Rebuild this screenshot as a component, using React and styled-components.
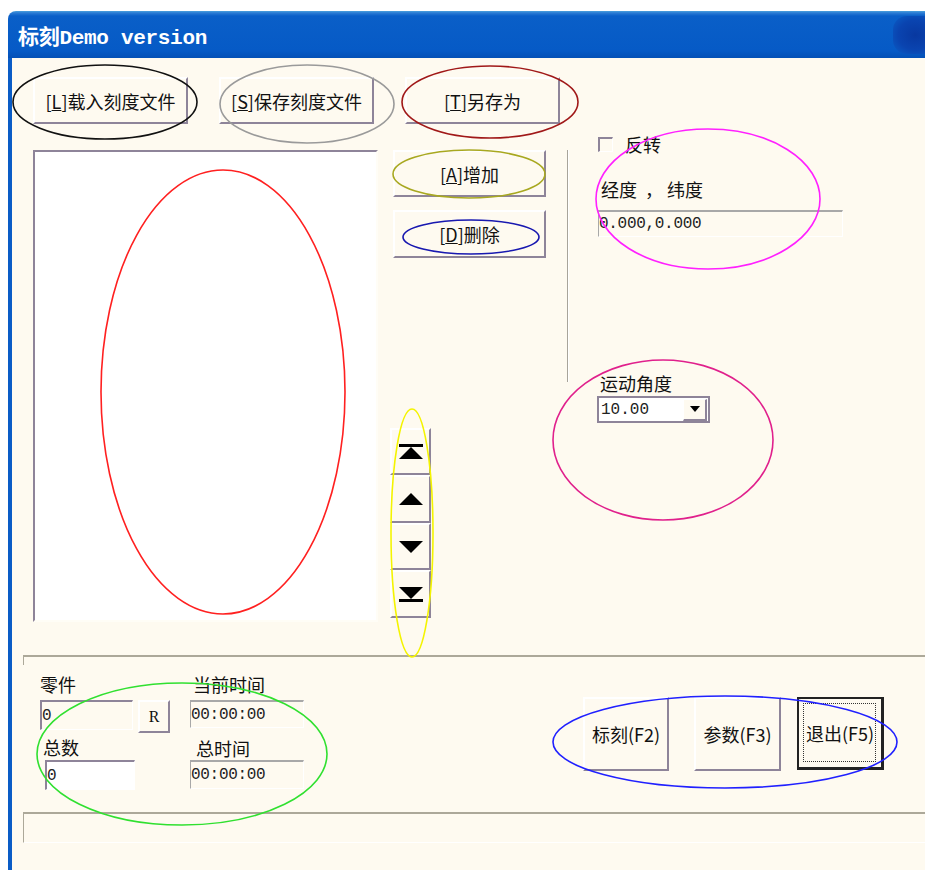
import React from "react";
import styled, { createGlobalStyle } from "styled-components";

const GlobalStyle = createGlobalStyle`
  html, body { margin: 0; padding: 0; background: #fff; }
  body {
    width: 925px;
    height: 870px;
    overflow: hidden;
    font-family: "Noto Sans CJK SC", sans-serif;
  }
  * { box-sizing: border-box; }
`;

const CREAM = "#fefaf0";
const SHADE = "#8e8499";
const GROOVE = "#aca899";

const Page = styled.div`
  position: relative;
  width: 925px;
  height: 870px;
  padding: 11px 0 0 8px;
`;

const Window = styled.div`
  height: 859px;
  display: flex;
  flex-direction: column;
`;

const TitleBar = styled.div`
  height: 47px;
  flex: none;
  display: flex;
  align-items: center;
  padding-left: 10px;
  border-top-left-radius: 8px;
  background: linear-gradient(#4aa0dc 0, #2a7ad4 2px, #0a5fc8 5px, #065ac6 85%, #0450b6 100%);
  color: #fff;
  font: bold 21px "Liberation Mono", "Noto Sans CJK SC", monospace;
  letter-spacing: -0.3px;
`;

const CloseBlob = styled.div`
  margin-left: auto;
  width: 32px;
  height: 38px;
  border-radius: 14px 0 0 14px;
  background: radial-gradient(ellipse at 70% 50%, #0838a0 0, #0a44b0 55%, #0a5fc8 100%);
`;

const Client = styled.div`
  flex: 1;
  background: ${CREAM};
  border-left: 4px solid #0a5cc6;
  padding: 19px 0 0 21px;
  display: flex;
  flex-direction: column;
`;

const TopArea = styled.div`
  display: flex;
`;

const LeftBlock = styled.div`
  width: 526px;
  display: flex;
  flex-direction: column;
`;

const ButtonRow = styled.div`
  display: flex;
  gap: 31px;
`;

const Btn = styled.button`
  width: ${(p) => p.$w}px;
  height: ${(p) => p.$h}px;
  flex: none;
  padding: 0;
  margin: 0;
  position: relative;
  background: ${CREAM};
  border: 0;
  border-top: 2px solid #fff;
  border-left: 2px solid #fff;
  border-right: 2px solid ${SHADE};
  border-bottom: 2px solid ${SHADE};
  font: 18px "Noto Sans CJK SC", sans-serif;
  color: #111;
  display: flex;
  align-items: center;
  justify-content: center;
`;

const DefaultBtn = styled(Btn)`
  border: 2px solid #222;
  border-right-width: 3px;
  border-bottom-width: 3px;
  &::after {
    content: "";
    position: absolute;
    inset: 4px 5px 5px 4px;
    border: 1px dotted #333;
  }
`;

const MainRow = styled.div`
  display: flex;
  margin-top: 26px;
`;

const ListBox = styled.div`
  width: 345px;
  height: 472px;
  background: #fff;
  border-top: 2px solid ${SHADE};
  border-left: 2px solid ${SHADE};
  border-right: 2px solid #fffdf6;
  border-bottom: 2px solid #fffdf6;
`;

const MidCol = styled.div`
  margin-left: 12px;
  width: 156px;
  display: flex;
  flex-direction: column;
  align-items: flex-start;
`;

const SideBtnWrap = styled.div`
  margin-left: 3px;
  margin-top: ${(p) => p.$top}px;
`;

const ArrowStack = styled.div`
  margin-top: auto;
  margin-bottom: 4px;
  display: flex;
  flex-direction: column;
`;

const RightBlock = styled.div`
  margin-left: 8px;
  display: flex;
`;

const VLine = styled.div`
  margin-top: 73px;
  width: 2px;
  height: 232px;
  border-left: 1px solid #a8a49a;
  border-right: 1px solid #fff;
`;

const RightContent = styled.div`
  margin-left: 28px;
  padding-top: 59px;
  display: flex;
  flex-direction: column;
`;

const CheckRow = styled.label`
  display: flex;
  align-items: center;
  gap: 12px;
  height: 16px;
  margin-left: 1px;
  font-size: 18px;
  color: #111;
`;

const CheckBox = styled.span`
  width: 15px;
  height: 15px;
  background: ${CREAM};
  border-top: 2px solid ${SHADE};
  border-left: 2px solid ${SHADE};
  border-right: 1px solid #fff;
  border-bottom: 1px solid #fff;
`;

const Label = styled.div`
  font-size: 18px;
  line-height: 20px;
  height: 20px;
  color: #111;
  white-space: pre;
  margin-top: ${(p) => p.$top || 0}px;
  padding-left: ${(p) => p.$left || 0}px;
`;

const ReadField = styled.div`
  width: ${(p) => p.$w}px;
  height: ${(p) => p.$h}px;
  margin-top: ${(p) => p.$top || 0}px;
  margin-left: ${(p) => p.$left || 0}px;
  border-top: 2px solid #a8a8a8;
  border-left: 1px solid #a8a8a8;
  border-right: 1px solid #fff;
  border-bottom: 1px solid #fff;
  display: flex;
  align-items: center;
  font: 16px "Liberation Mono", monospace;
  letter-spacing: -0.3px;
  color: #222;
`;

const EditField = styled.div`
  width: ${(p) => p.$w}px;
  height: ${(p) => p.$h}px;
  flex: none;
  margin-top: ${(p) => p.$top || 0}px;
  margin-left: ${(p) => p.$left || 0}px;
  background: ${(p) => (p.$white ? "#fff" : CREAM)};
  border-top: 2px solid ${SHADE};
  border-left: 2px solid ${SHADE};
  border-right: 1px solid #fff;
  border-bottom: 1px solid #fff;
  display: flex;
  align-items: center;
  font: 16px "Liberation Mono", monospace;
  color: #222;
`;

const Combo = styled(EditField)`
  justify-content: space-between;
  padding-left: 2px;
  padding-right: 1px;
  border-right: 2px solid ${SHADE};
  border-bottom: 2px solid ${SHADE};
`;

const DropBtn = styled.span`
  width: 24px;
  height: 22px;
  background: ${CREAM};
  border-top: 1px solid #fff;
  border-left: 1px solid #fff;
  border-right: 2px solid ${SHADE};
  border-bottom: 2px solid ${SHADE};
  display: flex;
  align-items: center;
  justify-content: center;
`;

const GroupTick = styled.div`
  margin-top: 33px;
  margin-left: -10px;
  height: 10px;
  border-top: 2px solid ${GROOVE};
  border-left: 1px solid ${GROOVE};
`;

const BottomRow = styled.div`
  display: flex;
  margin-top: 9px;
  padding-left: 7px;
  height: 116px;
`;

const Col = styled.div`
  width: ${(p) => p.$w}px;
  display: flex;
  flex-direction: column;
`;

const FieldRow = styled.div`
  display: flex;
  margin-top: 6px;
`;

const RButton = styled(Btn)`
  margin-left: 5px;
  font: 16px "Liberation Serif", serif;
`;

const ActionRow = styled.div`
  display: flex;
  margin-left: 279px;
  margin-top: 23px;
`;

const ActionGap = styled.div`
  width: ${(p) => p.$w}px;
`;

const StatusBox = styled.div`
  margin-top: 22px;
  margin-left: -10px;
  height: 31px;
  border-top: 2px solid ${GROOVE};
  border-left: 1px solid ${GROOVE};
  border-bottom: 1px solid #fff;
`;

const Overlay = styled.svg`
  position: absolute;
  left: 0;
  top: 0;
  pointer-events: none;
`;

const ArrowIcon = ({ kind }) => (
  <svg width="26" height="18" viewBox="0 0 26 18">
    {kind === "first" && (
      <>
        <rect x="1" y="1" width="24" height="3" fill="#000" />
        <polygon points="13,4 25,16 1,16" fill="#000" />
      </>
    )}
    {kind === "up" && <polygon points="13,3 25,15 1,15" fill="#000" />}
    {kind === "down" && <polygon points="1,3 25,3 13,15" fill="#000" />}
    {kind === "last" && (
      <>
        <polygon points="1,2 25,2 13,14" fill="#000" />
        <rect x="1" y="14" width="24" height="3" fill="#000" />
      </>
    )}
  </svg>
);

const marks = [
  { cx: 105, cy: 102, rx: 92, ry: 37, c: "#111" },
  { cx: 307, cy: 104, rx: 87, ry: 39, c: "#9a9a9a" },
  { cx: 490, cy: 102, rx: 88, ry: 36, c: "#a01818" },
  { cx: 223, cy: 392, rx: 122, ry: 222, c: "#ff2020" },
  { cx: 469, cy: 174, rx: 76, ry: 24, c: "#a8a820" },
  { cx: 471, cy: 237, rx: 68, ry: 17, c: "#1818b0" },
  { cx: 708, cy: 199, rx: 112, ry: 70, c: "#ff20ff" },
  { cx: 663, cy: 440, rx: 110, ry: 80, c: "#e0208c" },
  { cx: 412, cy: 533, rx: 21, ry: 124, c: "#f4f400" },
  { cx: 182, cy: 754, rx: 145, ry: 71, c: "#30e030" },
  { cx: 725, cy: 742, rx: 172, ry: 46, c: "#2020ff" },
];

export default function App() {
  return (
    <Page>
      <GlobalStyle />
      <Window>
        <TitleBar>
          标刻Demo version
          <CloseBlob />
        </TitleBar>
        <Client>
          <TopArea>
            <LeftBlock>
              <ButtonRow>
                <Btn $w={155} $h={47}>[<u>L</u>]载入刻度文件</Btn>
                <Btn $w={155} $h={47}>[<u>S</u>]保存刻度文件</Btn>
                <Btn $w={155} $h={47}>[<u>T</u>]另存为</Btn>
              </ButtonRow>
              <MainRow>
                <ListBox />
                <MidCol>
                  <SideBtnWrap $top={0}>
                    <Btn $w={153} $h={47}>[<u>A</u>]增加</Btn>
                  </SideBtnWrap>
                  <SideBtnWrap $top={13}>
                    <Btn $w={153} $h={48}>[<u>D</u>]删除</Btn>
                  </SideBtnWrap>
                  <ArrowStack>
                    <Btn $w={41} $h={47}><ArrowIcon kind="first" /></Btn>
                    <Btn $w={41} $h={48}><ArrowIcon kind="up" /></Btn>
                    <Btn $w={41} $h={47}><ArrowIcon kind="down" /></Btn>
                    <Btn $w={41} $h={48}><ArrowIcon kind="last" /></Btn>
                  </ArrowStack>
                </MidCol>
              </MainRow>
            </LeftBlock>
            <RightBlock>
              <VLine />
              <RightContent>
                <CheckRow>
                  <CheckBox />
                  反转
                </CheckRow>
                <Label $top={27} $left={4}>{"经度  ， 纬度"}</Label>
                <ReadField $w={245} $h={27} $top={11} $left={1}>0.000,0.000</ReadField>
                <Label $top={136} $left={3}>运动角度</Label>
                <Combo $w={113} $h={27} $top={3} $white>
                  10.00
                  <DropBtn>
                    <svg width="12" height="7" viewBox="0 0 12 7">
                      <polygon points="1,0 11,0 6,6" fill="#000" />
                    </svg>
                  </DropBtn>
                </Combo>
              </RightContent>
            </RightBlock>
          </TopArea>

          <GroupTick />

          <BottomRow>
            <Col $w={150}>
              <Label>零件</Label>
              <FieldRow>
                <EditField $w={93} $h={30}>0</EditField>
                <RButton $w={32} $h={33}>R</RButton>
              </FieldRow>
              <Label $top={4} $left={3}>总数</Label>
              <EditField $w={90} $h={30} $top={3} $left={5} $white>0</EditField>
            </Col>
            <Col $w={114}>
              <Label $left={3}>当前时间</Label>
              <ReadField $w={114} $h={28} $top={6}>00:00:00</ReadField>
              <Label $top={10} $left={6}>总时间</Label>
              <ReadField $w={114} $h={29} $top={2}>00:00:00</ReadField>
            </Col>
            <ActionRow>
              <Btn $w={86} $h={74}>标刻(F2)</Btn>
              <ActionGap $w={25} />
              <Btn $w={87} $h={74}>参数(F3)</Btn>
              <ActionGap $w={16} />
              <DefaultBtn $w={87} $h={73}>退出(F5)</DefaultBtn>
            </ActionRow>
          </BottomRow>

          <StatusBox />
        </Client>
      </Window>

      <Overlay width="925" height="870" viewBox="0 0 925 870">
        {marks.map((m, i) => (
          <ellipse
            key={i}
            cx={m.cx}
            cy={m.cy}
            rx={m.rx}
            ry={m.ry}
            fill="none"
            stroke={m.c}
            strokeWidth="1.6"
          />
        ))}
      </Overlay>
    </Page>
  );
}
